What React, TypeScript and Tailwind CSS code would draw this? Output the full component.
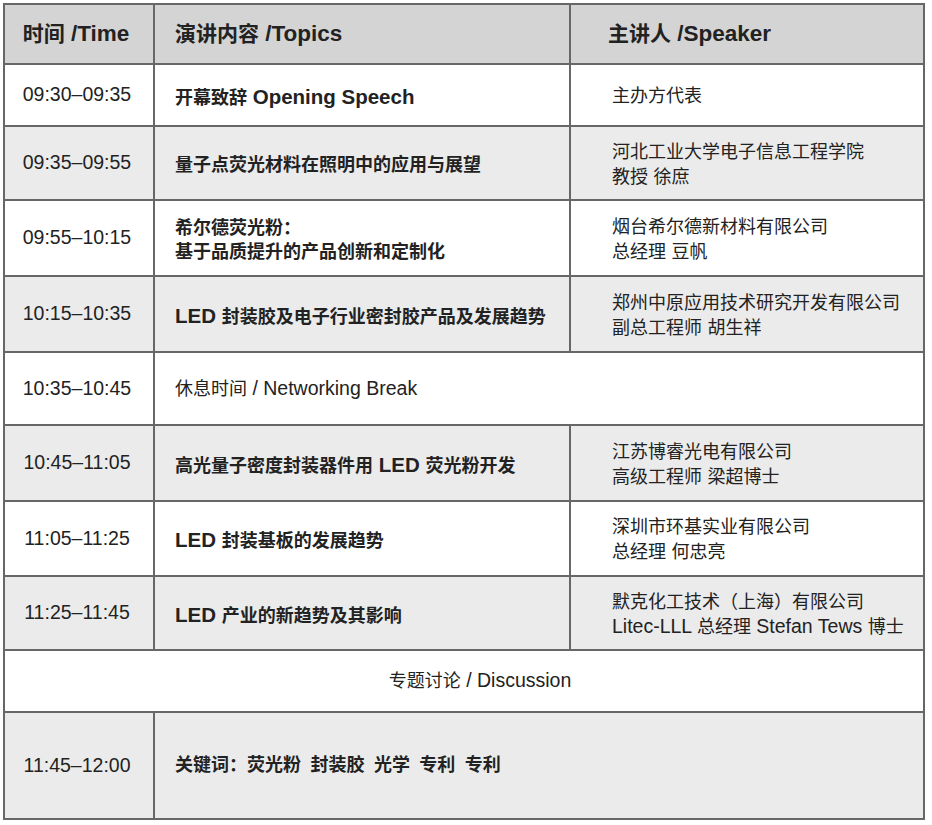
import React from 'react';

type Row = {
  time: string;
  topic: string[];
  speaker?: string[];
  gray: boolean;
  h: string;
};

const rows: Row[] = [
  { time: '09:30–09:35', topic: ['开幕致辞 Opening Speech'], speaker: ['主办方代表'], gray: false, h: 'h-[62px]' },
  {
    time: '09:35–09:55',
    topic: ['量子点荧光材料在照明中的应用与展望'],
    speaker: ['河北工业大学电子信息工程学院', '教授 徐庶'],
    gray: true,
    h: 'h-[74px]',
  },
  {
    time: '09:55–10:15',
    topic: ['希尔德荧光粉：', '基于品质提升的产品创新和定制化'],
    speaker: ['烟台希尔德新材料有限公司', '总经理 豆帆'],
    gray: false,
    h: 'h-[76px]',
  },
  {
    time: '10:15–10:35',
    topic: ['LED 封装胶及电子行业密封胶产品及发展趋势'],
    speaker: ['郑州中原应用技术研究开发有限公司', '副总工程师 胡生祥'],
    gray: true,
    h: 'h-[76px]',
  },
];

const rows2: Row[] = [
  {
    time: '10:45–11:05',
    topic: ['高光量子密度封装器件用 LED 荧光粉开发'],
    speaker: ['江苏博睿光电有限公司', '高级工程师 梁超博士'],
    gray: true,
    h: 'h-[76px]',
  },
  {
    time: '11:05–11:25',
    topic: ['LED 封装基板的发展趋势'],
    speaker: ['深圳市环基实业有限公司', '总经理 何忠亮'],
    gray: false,
    h: 'h-[75px]',
  },
  {
    time: '11:25–11:45',
    topic: ['LED 产业的新趋势及其影响'],
    speaker: ['默克化工技术（上海）有限公司', 'Litec-LLL 总经理 Stefan Tews 博士'],
    gray: true,
    h: 'h-[74px]',
  },
];

// latin glyphs in the source print larger than the CJK ones, so size the runs separately
const Mixed = ({ text, cjk, latin }: { text: string; cjk: string; latin: string }) => (
  <span className="whitespace-pre">
    {text
      .split(/([\u3000-\u9fff\uff00-\uffef]+)/)
      .filter(Boolean)
      .map((part, i) =>
        /[\u3000-\u9fff\uff00-\uffef]/.test(part) ? (
          <span key={i} className={cjk}>
            {part}
          </span>
        ) : (
          <span key={i} className={latin}>
            {part}
          </span>
        ),
      )}
  </span>
);

const SessionRow = ({ row }: { row: Row }) => {
  const bg = row.gray ? 'bg-[#ebebeb]' : 'bg-white';
  return (
    <div className={`grid grid-cols-[148px_416px_354px] border-t-2 border-[#676767] ${row.h} ${bg}`}>
      <div className="flex items-center justify-center pr-[4px] text-[19.5px]">{row.time}</div>
      <div className="flex flex-col justify-center border-l-2 border-[#676767] pt-[4px] pl-[20px] text-[18px] font-bold leading-[24px]">
        {row.topic.map((t) => (
          <div key={t}>
            <Mixed text={t} cjk="text-[18px]" latin="text-[20.5px]" />
          </div>
        ))}
      </div>
      <div className="flex flex-col justify-center border-l-2 border-[#676767] pt-[2px] pl-[41px] text-[18px] leading-[24px]">
        {row.speaker?.map((s) => (
          <div key={s}>
            <Mixed text={s} cjk="text-[18px]" latin="text-[19.5px]" />
          </div>
        ))}
      </div>
    </div>
  );
};

export default function App() {
  return (
    <div
      className="min-h-[825px] w-[932px] bg-white pl-[3px] pt-[3px] text-[#222]"
      style={{ fontFamily: '"Liberation Sans", "Noto Sans CJK SC", sans-serif' }}
    >
      <div className="w-[922px] border-2 border-[#676767]">
        {/* header */}
        <div className="grid h-[58px] grid-cols-[148px_416px_354px] bg-[#d4d4d4] font-bold">
          <div className="flex items-center justify-center pr-[6px]">
            <Mixed text="时间 /Time" cjk="text-[21px]" latin="text-[22.5px]" />
          </div>
          <div className="flex items-center border-l-2 border-[#676767] pl-[20px]">
            <Mixed text="演讲内容 /Topics" cjk="text-[21px]" latin="text-[22.5px]" />
          </div>
          <div className="flex items-center border-l-2 border-[#676767] pl-[37px]">
            <Mixed text="主讲人 /Speaker" cjk="text-[21px]" latin="text-[22.5px]" />
          </div>
        </div>

        {rows.map((r) => (
          <SessionRow key={r.time} row={r} />
        ))}

        {/* break */}
        <div className="grid h-[73px] grid-cols-[148px_772px] border-t-2 border-[#676767] bg-white">
          <div className="flex items-center justify-center pr-[4px] text-[19.5px]">10:35–10:45</div>
          <div className="flex items-center border-l-2 border-[#676767] pl-[20px]">
            <Mixed text="休息时间 / Networking Break" cjk="text-[18px]" latin="text-[19.5px]" />
          </div>
        </div>

        {rows2.map((r) => (
          <SessionRow key={r.time} row={r} />
        ))}

        {/* discussion */}
        <div className="flex h-[62px] items-center justify-center border-t-2 border-[#676767] bg-white pl-[32px]">
          <Mixed text="专题讨论 / Discussion" cjk="text-[18px]" latin="text-[19.5px]" />
        </div>

        <div className="grid h-[107px] grid-cols-[148px_772px] border-t-2 border-[#676767] bg-[#ebebeb]">
          <div className="flex items-center justify-center pr-[4px] text-[19.5px]">11:45–12:00</div>
          <div className="flex items-center border-l-2 border-[#676767] pl-[20px] font-bold">
            <Mixed text="关键词：荧光粉  封装胶  光学  专利  专利" cjk="text-[18px]" latin="text-[17px]" />
          </div>
        </div>
      </div>
    </div>
  );
}
